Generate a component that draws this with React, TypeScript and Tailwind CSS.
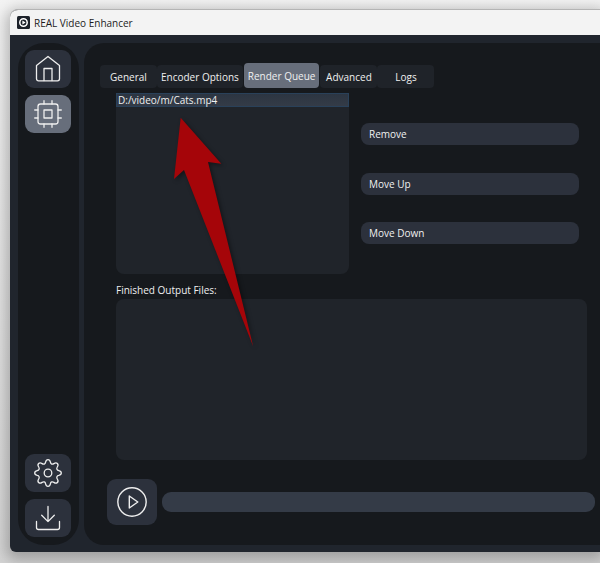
import React from 'react'
import clsx from 'clsx'

const tabs = ['General', 'Encoder Options', 'Render Queue', 'Advanced', 'Logs']
const queue = ['D:/video/m/Cats.mp4']
const actions = ['Remove', 'Move Up', 'Move Down']

const Icon: React.FC<{ children: React.ReactNode }> = ({ children }) => (
  <svg
    className="w-7 h-7"
    viewBox="0 0 28 28"
    fill="none"
    stroke="currentColor"
    strokeWidth={1.3}
    strokeLinecap="round"
    strokeLinejoin="round"
  >
    {children}
  </svg>
)

const SideButton: React.FC<{ label: string; active?: boolean; children: React.ReactNode }> = ({
  label,
  active = false,
  children,
}) => (
  <button
    type="button"
    aria-label={label}
    className={clsx(
      'flex items-center justify-center w-[46px] h-[38px] rounded-[9px] text-[#eeeeee]',
      active ? 'bg-[#676e7b]' : 'bg-[#2c313c]',
    )}
  >
    <Icon>{children}</Icon>
  </button>
)

const App: React.FC = () => {
  return (
    <div className="relative flex flex-col min-h-screen overflow-hidden pt-[9px] pl-[10px] pb-[11px] bg-linear-to-b from-[#f3f3f3] to-[#d4d4d4] font-['Open_Sans','Noto_Sans',sans-serif] text-[10px] leading-[14px] text-[#f0f0f0]">
      <div className="flex flex-col flex-1 overflow-hidden rounded-tl-lg rounded-bl-md border-t border-[#b4b4b4] bg-[#20252d] shadow-[0_4px_14px_4px_rgba(0,0,0,0.25)]">
        {/* Title bar */}
        <header className="flex items-center gap-1 h-[25px] pl-[7px] bg-[#f3f3f3] text-[#1c1c1c]">
          <svg className="w-[13px] h-[13px]" viewBox="0 0 13 13">
            <rect width="13" height="13" rx="1.5" fill="#1d222a" />
            <circle cx="6.5" cy="6.5" r="3.7" fill="none" stroke="#fff" strokeWidth="1.5" />
            <path d="M5.4 4.6 8.6 6.5 5.4 8.4z" fill="#fff" />
          </svg>
          <h1>REAL Video Enhancer</h1>
        </header>

        <div className="flex flex-1 gap-[5px] pt-2 pb-[7px] pl-2">
          {/* Sidebar */}
          <nav className="flex flex-col justify-between w-[61px] pl-[7px] pt-[7px] pb-2 rounded-[26px] bg-[#16191d]">
            <div className="flex flex-col gap-[7px]">
              <SideButton label="Home">
                <path d="M2.5 10.5 14 1.5l11.5 9v13.3a2 2 0 0 1-2 2h-19a2 2 0 0 1-2-2z" />
                <path d="M10 25.5V13.5h8v12" />
              </SideButton>
              <SideButton label="Process" active>
                <rect x="4" y="4" width="20" height="20" rx="2.5" />
                <rect x="10" y="10" width="8" height="8" />
                <path d="M10 4V.7M18 4V.7M10 24v3.3M18 24v3.3M4 10H.7M4 18H.7M24 10h3.3M24 18h3.3" />
              </SideButton>
            </div>
            <div className="flex flex-col gap-[7px]">
              <SideButton label="Settings">
                <circle cx="14" cy="14" r="3.8" />
                <path d="M11.6 3.2C12 1.3 12.7.7 14 .7s2 .6 2.4 2.5c.3 1.9 1.9 2.5 3.5 1.4 1.6-1.1 2.6-1 3.5-.1s1 1.9-.1 3.5c-1.1 1.6-.4 3.3 1.5 3.6 1.9.4 2.5 1.1 2.5 2.4s-.6 2-2.5 2.4c-1.9.3-2.6 2-1.5 3.6 1.1 1.6 1 2.6.1 3.5s-1.9 1-3.5-.1c-1.6-1.1-3.2-.5-3.5 1.4-.4 1.9-1.1 2.5-2.4 2.5s-2-.6-2.4-2.5c-.3-1.9-1.9-2.5-3.5-1.4-1.6 1.1-2.6 1-3.5.1s-1-1.9.1-3.5c1.1-1.6.4-3.3-1.5-3.6C1.3 16 .7 15.3.7 14s.6-2 2.5-2.4c1.9-.3 2.6-2 1.5-3.6-1.1-1.6-1-2.6-.1-3.5s1.9-1 3.5.1c1.6 1.1 3.2.5 3.5-1.4z" />
              </SideButton>
              <SideButton label="Downloads">
                <path d="M14 2.5V17.5M7.7 11.3 14 17.6l6.3-6.3" />
                <path d="M2.5 17.5v6a2 2 0 0 0 2 2h19a2 2 0 0 0 2-2v-6" />
              </SideButton>
            </div>
          </nav>

          {/* Main panel */}
          <main className="flex flex-col flex-1 pt-5 pb-5 rounded-l-[20px] bg-[#16191d]">
            <div role="tablist" className="flex items-end pl-4">
              {tabs.map((tab) => {
                const active = tab === 'Render Queue'
                return (
                  <button
                    key={tab}
                    type="button"
                    role="tab"
                    aria-selected={active}
                    className={clsx(
                      'min-w-[57px] px-1 rounded-sm whitespace-nowrap',
                      active ? 'h-[25px] mx-px bg-[#676e7b]' : 'h-[23px] bg-[#1f2329]',
                    )}
                  >
                    {tab}
                  </button>
                )
              })}
            </div>

            <div className="flex flex-col flex-1 mt-[5px] pl-8 pr-[13px]">
              <div className="grid grid-cols-2 gap-[5px]">
                <ul className="h-[181px] rounded-b-lg bg-[#20242a]">
                  {queue.map((file) => (
                    <li
                      key={file}
                      className="h-[14px] px-px leading-[12px] border border-[#29415a] bg-linear-to-b from-[#2c3542] to-[#343b47]"
                    >
                      {file}
                    </li>
                  ))}
                </ul>
                <div className="flex flex-col justify-between py-[30px] pl-[7px] pr-2">
                  {actions.map((action) => (
                    <button key={action} type="button" className="h-[22px] px-2 rounded-lg bg-[#2c313c] text-left">
                      {action}
                    </button>
                  ))}
                </div>
              </div>

              <h2 className="mt-[9px] mb-0.5">Finished Output Files:</h2>
              <div className="flex-1 min-h-[140px] rounded-lg bg-[#20242a]" />
            </div>

            {/* Render controls */}
            <div className="flex items-center gap-[5px] mt-[19px] pl-[23px] pr-[5px]">
              <button
                type="button"
                aria-label="Start render"
                className="flex items-center justify-center w-[50px] h-[46px] rounded-[9px] bg-[#2c313c] text-[#eeeeee]"
              >
                <svg
                  className="w-[30px] h-[30px]"
                  viewBox="0 0 30 30"
                  fill="none"
                  stroke="currentColor"
                  strokeWidth={1.4}
                  strokeLinejoin="round"
                >
                  <circle cx="15" cy="15" r="14.2" />
                  <path d="M12.3 9v12l8.5-6z" />
                </svg>
              </button>
              <div role="progressbar" aria-label="Render progress" className="flex-1 h-5 rounded-[9px] bg-[#343b47]" />
            </div>
          </main>
        </div>
      </div>

      {/* Arrow pointing at the queued file */}
      <svg
        className="absolute left-[173px] top-[117px] w-20 h-[230px] overflow-visible pointer-events-none drop-shadow-[2px_2px_2px_rgba(0,0,0,0.4)]"
        viewBox="0 0 80 230"
        fill="#a50509"
      >
        <path d="M7.7.7 48.3 46.7 35 45 80.2 229.5 11 53 1 62z" />
      </svg>
    </div>
  )
}

export default App
